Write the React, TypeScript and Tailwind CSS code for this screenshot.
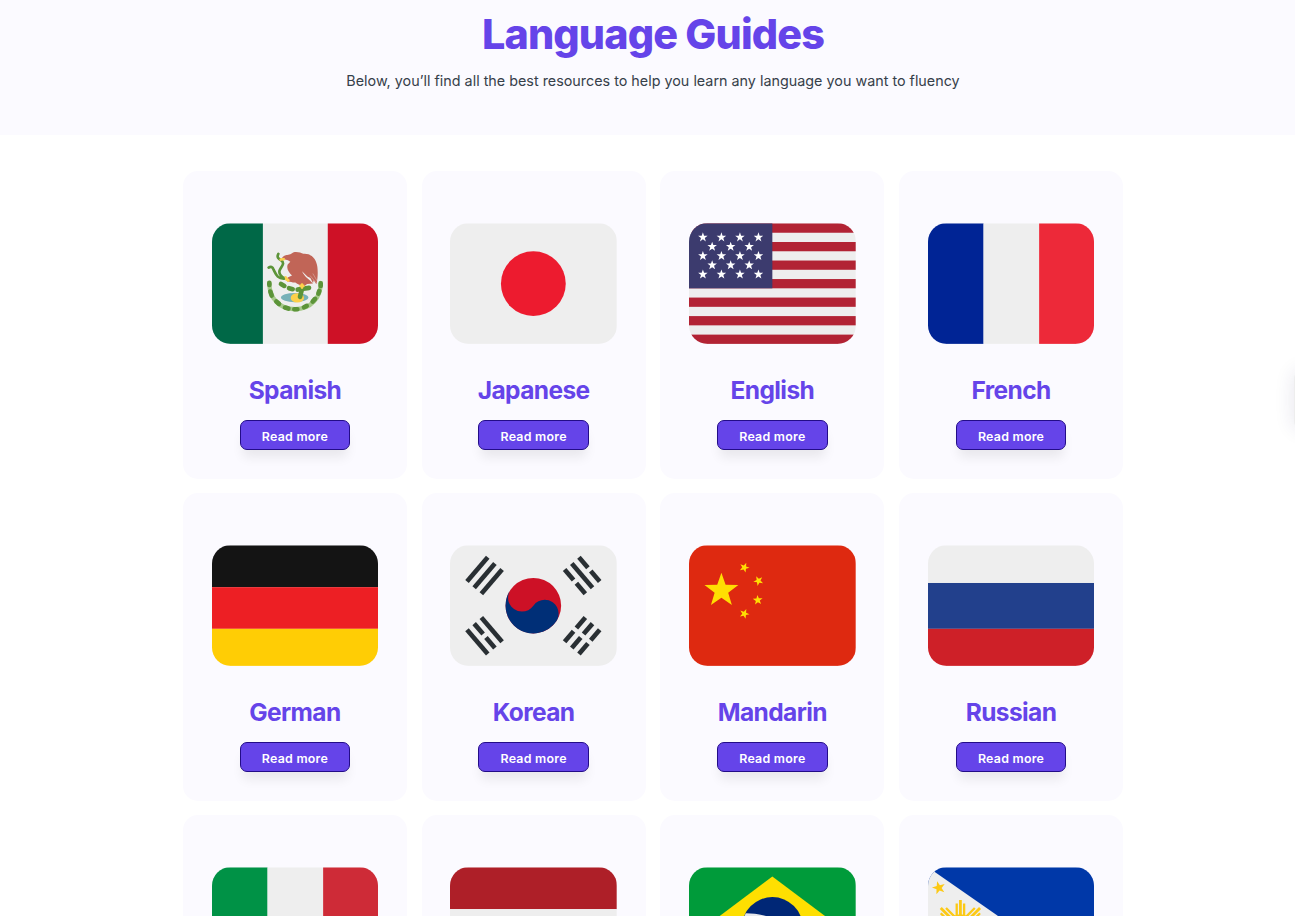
import React from 'react';

interface Language {
  name?: string;
  flag: React.ReactNode;
}

// Regular five-pointed star, inner radius follows from the pentagram ratio
const Star = ({ x, y, r, rotate = 0, fill }: { x: number; y: number; r: number; rotate?: number; fill: string }) => {
  const points = Array.from({ length: 10 }, (_, i) => {
    const radius = i % 2 === 0 ? r : r * 0.4;
    const angle = ((i * 36 - 90 + rotate) * Math.PI) / 180;
    return `${(x + radius * Math.cos(angle)).toFixed(3)},${(y + radius * Math.sin(angle)).toFixed(3)}`;
  }).join(' ');
  return <polygon points={points} fill={fill} />;
};

const VerticalStripes = ({ colors }: { colors: string[] }) => (
  <>
    {colors.map((color, i) => (
      <rect key={i} x={i * 12} y="5" width="12" height="26" fill={color} />
    ))}
  </>
);

const MexicoFlag = () => (
  <>
    <rect y="5" width="11" height="26" fill="#006847" />
    <rect x="11" y="5" width="14" height="26" fill="#EEE" />
    <rect x="25" y="5" width="11" height="26" fill="#CE1126" />
    <g transform="scale(.072) translate(129 119.6)" fill="none" strokeLinecap="round">
      {/* wreath */}
      <path d="M43 128C43 172 72 207 120 207S197 172 197 128" stroke="#A6C98B" strokeWidth="13" />
      <path d="M43 128v6M46 154l4 12M64 184l8 7M90 202l10 3M118 207h9M147 201l8-4M173 184l7-8M190 160l3-8M197 137v-8" stroke="#5C9439" strokeWidth="14" />
      {/* lake */}
      <ellipse cx="119" cy="172" rx="41" ry="14" fill="#77B1B8" />
      <ellipse cx="127" cy="173" rx="20" ry="14" fill="#FCD04B" />
      <path d="M78 131l10 6M102 144l11 3M128 148l34-5M140 150l-5 20" stroke="#5C9439" strokeWidth="14" />
      {/* snake */}
      <path d="M70 41C64 52 72 57 78 60C92 70 78 80 74 90C70 101 80 111 91 115C67 118 62 101 56 89C53 79 47 78 41 82" stroke="#5C9439" strokeWidth="8" />
      {/* eagle */}
      <path d="M82 51C91 42 104 45 111 39C118 32 137 36 145 41C165 39 180 52 184 68C190 83 189 114 184 132L176 120L174 128L166 113L157 109L141 93C150 112 164 118 174 130L156 131L149 137C136 137 128 132 121 127C112 128 106 123 97 124L98 112L111 106C100 95 94 85 98 73L106 65C96 56 89 60 82 58Z" fill="#C16557" />
      <path d="M166 107l16 19M174 101l13 22" stroke="#EEE" strokeWidth="1" />
      <path d="M77 58l9-1M94 118l6 2M137 137h8M141 133v9" stroke="#FCD04B" strokeWidth="8" />
      <path d="M92 111l7 10" stroke="#FCD04B" strokeWidth="7" />
    </g>
  </>
);

const UsaFlag = () => (
  <>
    <rect y="5" width="36" height="26" fill="#EEE" />
    {[5, 9, 13, 17, 21, 25, 29].map(y => (
      <rect key={y} y={y} width="36" height="2" fill="#B22334" />
    ))}
    <rect y="5" width="18" height="14" fill="#3C3B6E" />
    {[8, 12, 16].map(y => [3, 7, 11, 15].map(x => <Star key={`${x}-${y}`} x={x} y={y} r={1.08} fill="#FFF" />))}
    {[10, 14].map(y => [5, 9, 13].map(x => <Star key={`${x}-${y}`} x={x} y={y} r={1.08} fill="#FFF" />))}
  </>
);

const Trigram = ({ x, y, rotate, bars }: { x: number; y: number; rotate: number; bars: boolean[] }) => (
  <g transform={`translate(${x} ${y}) rotate(${rotate})`} fill="#292F33">
    {bars.map((solid, i) => {
      const top = (i - 1) * 2.04 - 0.5;
      return solid ? (
        <rect key={i} x="-3.45" y={top} width="6.9" height="1" />
      ) : (
        <React.Fragment key={i}>
          <rect x="-3.45" y={top} width="2.98" height="1" />
          <rect x=".47" y={top} width="2.98" height="1" />
        </React.Fragment>
      );
    })}
  </g>
);

const KoreaFlag = () => (
  <>
    <rect y="5" width="36" height="26" fill="#EEE" />
    <circle cx="18" cy="18" r="6" fill="#CD1126" />
    <path fill="#002F77" d="M13.085 14.559c-1.901 2.714-1.241 6.455 1.474 8.356 2.714 1.901 6.455 1.242 8.356-1.474.951-1.355.621-3.226-.736-4.178-1.357-.949-3.228-.619-4.179.736-.949 1.357-2.82 1.688-4.178.738-1.357-.951-1.688-2.822-.737-4.178z" />
    <Trigram x={7.46} y={11.5} rotate={-49.5} bars={[true, true, true]} />
    <Trigram x={28.54} y={11.5} rotate={49.5} bars={[false, true, false]} />
    <Trigram x={7.46} y={24.5} rotate={49.5} bars={[true, false, true]} />
    <Trigram x={28.54} y={24.5} rotate={-49.5} bars={[false, false, false]} />
  </>
);

const ChinaFlag = () => (
  <>
    <rect y="5" width="36" height="26" fill="#DE2910" />
    <Star x={7} y={14.75} r={3.85} fill="#FFDE02" />
    <Star x={11.95} y={9.75} r={1.12} rotate={22} fill="#FFDE02" />
    <Star x={15} y={12.65} r={1.12} rotate={-26} fill="#FFDE02" />
    <Star x={14.85} y={16.8} r={1.12} rotate={-4} fill="#FFDE02" />
    <Star x={11.95} y={19.75} r={1.12} rotate={22} fill="#FFDE02" />
  </>
);

const BrazilFlag = () => (
  <>
    <rect y="5" width="36" height="26" fill="#009B3A" />
    <path d="M32.73 18L18 29.06 3.27 18 18 6.94z" fill="#FEDF01" />
    <circle cx="18" cy="18" r="6.6" fill="#002776" />
    <path d="M12.277 14.887c-.332.621-.558 1.303-.672 2.023 3.995-.29 9.417 1.891 11.744 4.595.402-.604.7-1.28.883-2.004-2.872-2.808-7.917-4.63-11.955-4.614z" fill="#E6E8EC" />
  </>
);

const PhilippinesFlag = () => (
  <>
    <rect y="5" width="36" height="13" fill="#0038A8" />
    <rect y="18" width="36" height="13" fill="#CE1126" />
    <path d="M0 4.95L18.75 18 0 31.05z" fill="#EEE" />
    <Star x={2.35} y={9.4} r={1.5} rotate={-15} fill="#FCC915" />
    <circle cx="7" cy="18" r="2.9" fill="#FCC915" />
    {[0, 45, 90, 135, 180, 225, 270, 315].map(angle => (
      <g key={angle} transform={`rotate(${angle} 7 18)`} fill="none" stroke="#FCC915">
        <path d="M7 18V12" strokeWidth=".6" />
        <path d="M6.2 17V12.8M7.8 17V12.8" strokeWidth=".5" />
      </g>
    ))}
  </>
);

const LANGUAGES: Language[] = [
  { name: 'Spanish', flag: <MexicoFlag /> },
  {
    name: 'Japanese',
    flag: (
      <>
        <rect y="5" width="36" height="26" fill="#EEE" />
        <circle cx="18" cy="18" r="7" fill="#ED1B2F" />
      </>
    ),
  },
  { name: 'English', flag: <UsaFlag /> },
  { name: 'French', flag: <VerticalStripes colors={['#002495', '#EEE', '#ED2939']} /> },
  {
    name: 'German',
    flag: (
      <>
        <rect y="5" width="36" height="9" fill="#141414" />
        <rect y="14" width="36" height="9" fill="#ED1F24" />
        <rect y="23" width="36" height="8" fill="#FFCD05" />
      </>
    ),
  },
  { name: 'Korean', flag: <KoreaFlag /> },
  { name: 'Mandarin', flag: <ChinaFlag /> },
  {
    name: 'Russian',
    flag: (
      <>
        <rect y="5" width="36" height="8.1" fill="#EEE" />
        <rect y="13.1" width="36" height="9.9" fill="#22408C" />
        <rect y="23" width="36" height="8" fill="#CE2028" />
      </>
    ),
  },
  { flag: <VerticalStripes colors={['#009246', '#EEE', '#CE2B37']} /> },
  {
    flag: (
      <>
        <rect y="5" width="36" height="9" fill="#AE1F28" />
        <rect y="14" width="36" height="8" fill="#EEE" />
        <rect y="22" width="36" height="9" fill="#20478B" />
      </>
    ),
  },
  { flag: <BrazilFlag /> },
  { flag: <PhilippinesFlag /> },
];

const LanguageCard: React.FC<Language> = ({ name, flag }) => (
  <article className="flex h-[307.2px] flex-col items-center rounded-[15px] bg-[#fbfaff] pt-[52px]">
    <svg viewBox="0 4.9 36 26.1" className="h-[120.9px] w-[166.7px] shrink-0 overflow-hidden rounded-[18.5px]">
      {flag}
    </svg>
    {name && (
      <>
        <h2 className="mt-[30px] text-[24.5px] leading-[32px] font-bold tracking-[-0.6px] text-[#6544e9]">{name}</h2>
        <button className="mt-[13.7px] h-[30px] w-[110.5px] rounded-[7px] border border-[#230c88] bg-[#6544e9] pt-[4px] text-[12.4px] leading-none font-semibold tracking-[0.25px] text-white shadow-[0_10px_12px_-3px_rgba(0,0,0,0.08)]">
          Read more
        </button>
      </>
    )}
  </article>
);

const App: React.FC = () => (
  <div className="relative h-[916px] w-full overflow-hidden bg-white font-['Inter',sans-serif]">
    <div className="w-[1306px]">
      <header className="h-[135px] bg-[#fbfaff] pt-[10px] text-center">
        <h1 className="text-[41.3px] leading-[48px] font-extrabold tracking-[-0.85px] text-[#6544e9]">Language Guides</h1>
        <p className="mt-[11px] text-[14.35px] leading-[24px] text-[#36404a]">
          Below, you’ll find all the best resources to help you learn any language you want to fluency
        </p>
      </header>
      <main className="mx-auto mt-[36.4px] grid w-[940px] grid-cols-4 gap-[14.8px]">
        {LANGUAGES.map((language, i) => (
          <LanguageCard key={i} {...language} />
        ))}
      </main>
    </div>
    {/* side tab tucked against the right edge */}
    <div className="absolute top-[371px] left-[1294px] h-[58px] w-[58px] rounded-[8px] bg-[#eee] shadow-[0_0_20px_rgba(40,30,100,0.12)]" />
  </div>
);

export default App;
